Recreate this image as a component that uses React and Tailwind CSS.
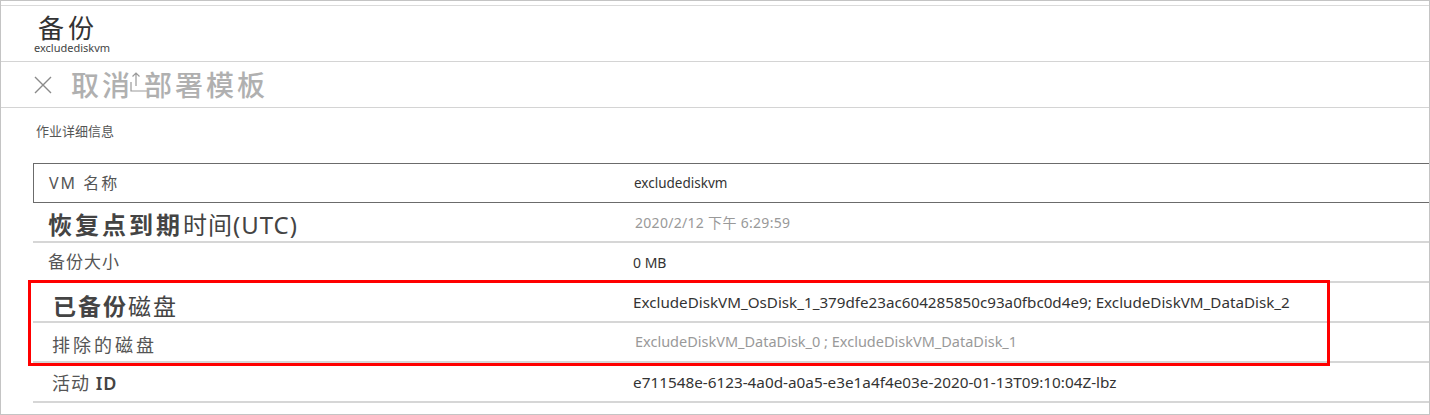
import React from 'react';

const cjk = { fontFamily: '"Noto Sans", "Noto Sans CJK SC", sans-serif' };

const rows = [
  {
    label: <span className="text-[16px] tracking-[2px] text-[#555]">VM 名称</span>,
    value: <span className="text-[13.5px] text-[#333]">excludediskvm</span>,
  },
  {
    label: (
      <span className="text-[24px] text-[#444] pt-[6px]">
        <span className="font-bold tracking-[3px]">恢复点到期</span>
        <span className="tracking-[1px]">时间(UTC)</span>
      </span>
    ),
    value: <span className="text-[14px] tracking-[0.3px] text-[#999] pl-[2px]">2020/2/12 下午 6:29:59</span>,
  },
  {
    label: <span className="text-[17px] tracking-[1px] text-[#555]">备份大小</span>,
    value: <span className="text-[14px] text-[#333]">0 MB</span>,
  },
  {
    label: (
      <span className="text-[23px] text-[#444] pt-[8px] pl-[5px]">
        <span className="font-bold tracking-[2px]">已备份</span>
        <span className="tracking-[2px]">磁盘</span>
      </span>
    ),
    value: <span className="text-[15.2px] text-[#333]">ExcludeDiskVM_OsDisk_1_379dfe23ac604285850c93a0fbc0d4e9; ExcludeDiskVM_DataDisk_2</span>,
  },
  {
    label: <span className="text-[18px] tracking-[3px] text-[#555] pt-[6px] pl-[4px]">排除的磁盘</span>,
    value: <span className="text-[14.5px] text-[#999] pl-[2px]">ExcludeDiskVM_DataDisk_0 ; ExcludeDiskVM_DataDisk_1</span>,
  },
  {
    label: (
      <span className="text-[18px] tracking-[1px] text-[#555] pt-[3px] pl-[4px]">
        活动 <span className="font-semibold text-[#444]">ID</span>
      </span>
    ),
    value: <span className="text-[15.3px] text-[#333]">e711548e-6123-4a0d-a0a5-e3e1a4f4e03e-2020-01-13T09:10:04Z-lbz</span>,
  },
];

export default function App() {
  return (
    <div className="relative w-[1430px] h-[415px] bg-white overflow-hidden" style={cjk}>
      <div className="h-[415px] border border-[#c4c4c4] flex flex-col">
        <div className="mt-[4px] border-t border-[#dadada]" />

        {/* blade header */}
        <div className="h-[56px] border-b border-[#d4d4d4] flex flex-col pl-[33px]">
          <div className="pt-[8px] pl-[4px] text-[26px] leading-[28px] tracking-[4px] text-[#333]">备份</div>
          <div className="text-[11px] leading-[12px] text-[#444]">excludediskvm</div>
        </div>

        {/* command bar */}
        <div className="h-[46px] border-b border-[#d4d4d4] flex items-center pl-[33px]">
          <svg width="18" height="18" viewBox="0 0 18 18" className="shrink-0">
            <path d="M1 1 L17 17 M17 1 L1 17" stroke="#8a8a8a" strokeWidth="1.4" fill="none" />
          </svg>
          <span className="ml-[19px] text-[28px] leading-[32px] font-medium text-[#b0b0b0] tracking-[3px]">取消</span>
          <svg width="18" height="22" viewBox="0 0 18 22" className="shrink-0 -ml-[3px] -mt-[6px]">
            <path d="M6 2 V15 M2.5 5.5 L6 2 L9.5 5.5 M1 11 V20 H17" stroke="#9a9a9a" strokeWidth="1.2" fill="none" />
          </svg>
          <span className="-ml-[4px] text-[28px] leading-[32px] font-medium text-[#b0b0b0] tracking-[3px]">部署模板</span>
        </div>

        <div className="pl-[35px] mt-[14px] text-[13px] leading-[18px] text-[#555]">作业详细信息</div>

        {/* details table */}
        <div className="mt-[23px] ml-[32px] flex flex-col">
          {rows.map((r, i) => (
            <div
              key={i}
              className={
                i === 0
                  ? 'h-[40px] flex items-center border border-r-0 border-[#6b6b6b]'
                  : 'h-[40px] flex items-center border-b-2 border-[#d6d6d6]'
              }
            >
              <div className="w-[600px] pl-[15px] flex items-center shrink-0">{r.label}</div>
              <div className="flex items-center">{r.value}</div>
            </div>
          ))}
        </div>
      </div>

      {/* highlight annotation */}
      <div className="absolute left-[28px] top-[280px] w-[1302px] h-[86px] border-[3px] border-[#ff0000] pointer-events-none" />
    </div>
  );
}
